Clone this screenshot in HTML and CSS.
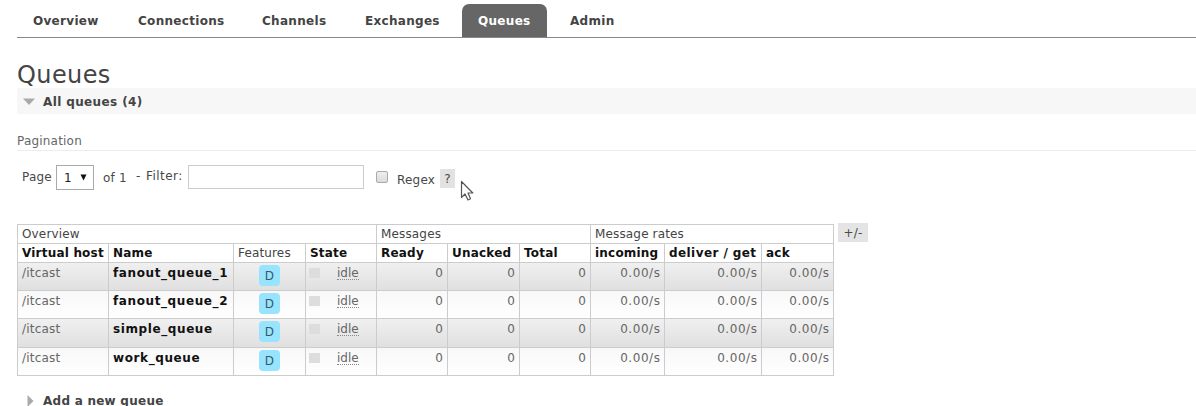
FILE: index.html
```html
<!DOCTYPE html>
<html lang="en">
<head>
<meta charset="utf-8">
<title>Queues</title>
<link rel="stylesheet" href="styles.css">
</head>
<body>
<nav class="tabs">
<a class="tab t-overview">Overview</a><a class="tab t-connections">Connections</a><a class="tab t-channels">Channels</a><a class="tab t-exchanges">Exchanges</a><a class="tab t-queues selected">Queues</a><a class="tab t-admin">Admin</a>
</nav>
<main>
<h1>Queues</h1>
<h2 class="section open"><svg class="tri" width="12" height="8" viewBox="0 0 12 8"><path d="M0 0.5H12L6 7z" fill="#aaa"/></svg><span>All queues (4)</span></h2>
<h3>Pagination</h3>
<form class="filters">
<span class="lbl-page">Page</span>
<span class="select"><span>1</span><svg width="7" height="7" viewBox="0 0 7 7"><path d="M0.5 0.5H6.5L3.5 6.5z" fill="#111"/></svg></span>
<span class="lbl-of">of 1</span>
<span class="lbl-dash">-</span>
<span class="lbl-filter">Filter:</span>
<input class="filter" type="text">
<span class="check"></span>
<span class="lbl-regex">Regex</span>
<span class="help">?</span>
<svg class="cursor" width="15" height="22" viewBox="0 0 15 22"><path d="M1.5 1.5V17.5L5 14L8 20L10.5 18.8L8 13H12.8z" fill="#fff" stroke="#555" stroke-width="1.2" stroke-linejoin="round"/></svg>
</form>
<div class="list">
<table>
<colgroup><col class="c-vhost"><col class="c-name"><col class="c-feat"><col class="c-state"><col class="c-ready"><col class="c-unacked"><col class="c-total"><col class="c-in"><col class="c-get"><col class="c-ack"></colgroup>
<thead>
<tr class="groups"><th colspan="4">Overview</th><th colspan="3">Messages</th><th colspan="3">Message rates</th></tr>
<tr class="heads"><th>Virtual host</th><th>Name</th><th class="plain">Features</th><th>State</th><th>Ready</th><th>Unacked</th><th>Total</th><th>incoming</th><th class="get">deliver / get</th><th>ack</th></tr>
</thead>
<tbody>
<tr class="alt"><td>/itcast</td><td class="name">fanout_queue_1</td><td class="feat"><span class="badge">D</span></td><td><span class="state"><i class="dot"></i><span class="idle">idle</span></span></td><td class="r">0</td><td class="r">0</td><td class="r">0</td><td class="r">0.00/s</td><td class="r">0.00/s</td><td class="r">0.00/s</td></tr>
<tr><td>/itcast</td><td class="name">fanout_queue_2</td><td class="feat"><span class="badge">D</span></td><td><span class="state"><i class="dot"></i><span class="idle">idle</span></span></td><td class="r">0</td><td class="r">0</td><td class="r">0</td><td class="r">0.00/s</td><td class="r">0.00/s</td><td class="r">0.00/s</td></tr>
<tr class="alt"><td>/itcast</td><td class="name">simple_queue</td><td class="feat"><span class="badge">D</span></td><td><span class="state"><i class="dot"></i><span class="idle">idle</span></span></td><td class="r">0</td><td class="r">0</td><td class="r">0</td><td class="r">0.00/s</td><td class="r">0.00/s</td><td class="r">0.00/s</td></tr>
<tr><td>/itcast</td><td class="name">work_queue</td><td class="feat"><span class="badge">D</span></td><td><span class="state"><i class="dot"></i><span class="idle">idle</span></span></td><td class="r">0</td><td class="r">0</td><td class="r">0</td><td class="r">0.00/s</td><td class="r">0.00/s</td><td class="r">0.00/s</td></tr>
</tbody>
</table>
<span class="columns">+/-</span>
</div>
<h2 class="section closed"><svg class="tri" width="7" height="12" viewBox="0 0 7 12"><path d="M0.5 0V12L6.5 6z" fill="#aaa"/></svg><span>Add a new queue</span></h2>
</main>
</body>
</html>
```

FILE: styles.css
```css
* { box-sizing: border-box; }
body {
  margin: 0;
  height: 406px;
  overflow: hidden;
  background: #fff;
  color: #484848;
  font: 12px/16px "DejaVu Sans", Verdana, sans-serif;
  letter-spacing: 0.2px;
}
.tabs {
  display: flex;
  align-items: flex-end;
  height: 38px;
  margin-left: 17px;
  border-bottom: 1px solid #888;
}
.tab {
  height: 33px;
  padding: 9px 0 0 16px;
  font-weight: bold;
  letter-spacing: 0.3px;
  color: #444;
  white-space: nowrap;
}
.t-overview { width: 105px; }
.t-connections { width: 124px; }
.t-channels { width: 103px; }
.t-exchanges { width: 113px; }
.t-queues { width: 85px; }
.t-admin { padding-left: 23px; }
.tab.selected {
  background: #666;
  color: #fff;
  border-radius: 7px 7px 0 0;
}
main { padding-left: 17px; }
h1 {
  margin: 20px 0 0;
  height: 30px;
  font-size: 24px;
  line-height: 34px;
  font-weight: normal;
  letter-spacing: 0.4px;
  color: #444;
}
.section {
  display: flex;
  align-items: center;
  margin: 0;
  height: 26px;
  font-size: 12px;
  color: #444;
  letter-spacing: 0.38px;
}
.open { background: #f7f7f7; padding: 2px 0 0 6px; }
.open .tri { margin-right: 8px; }
h3 {
  margin: 18px 0 0;
  height: 19px;
  font-size: 12px;
  line-height: 18px;
  font-weight: normal;
  color: #666;
  border-bottom: 1px solid #ececec;
}
.filters {
  position: relative;
  display: flex;
  align-items: flex-start;
  height: 73px;
  margin: 0;
  padding: 14px 0 0 5px;
  white-space: nowrap;
}
.filters > span { flex: none; }
.lbl-page { width: 34px; padding-top: 4px; }
.select {
  display: flex;
  align-items: center;
  justify-content: space-between;
  width: 38px;
  height: 25px;
  padding: 0 6px 0 7px;
  border: 1px solid #aaa;
  color: #222;
}
.lbl-of { width: 33px; margin-left: 9px; padding-top: 5px; }
.lbl-dash { width: 10px; padding-top: 3px; }
.lbl-filter { width: 42px; padding-top: 3px; letter-spacing: 0.45px; }
.filter {
  width: 176px;
  height: 24px;
  border: 1px solid #ccc;
  background: #fff;
}
.check {
  width: 12px;
  height: 12px;
  margin: 6px 9px 0 12px;
  border: 1px solid #aaa;
  border-radius: 2px;
  background: linear-gradient(#eee, #dcdcdc);
}
.lbl-regex { width: 43px; padding-top: 7px; }
.help {
  width: 15px;
  height: 19px;
  margin-top: 4px;
  line-height: 21px;
  text-align: center;
  background: #e2e2e2;
}
.cursor { position: absolute; left: 443px; top: 29px; }
.list { display: flex; align-items: flex-start; }
table {
  flex: none;
  width: 817px;
  table-layout: fixed;
  border-collapse: separate;
  border-spacing: 0;
  border-top: 1px solid #ccc;
  border-left: 1px solid #ccc;
}
.c-vhost { width: 91px; }
.c-name { width: 125px; }
.c-feat { width: 72px; }
.c-state { width: 71px; }
.c-ready { width: 71px; }
.c-unacked { width: 72px; }
.c-total { width: 71px; }
.c-in { width: 74px; }
.c-get { width: 97px; }
.c-ack { width: 72px; }
th, td {
  padding: 0 4px;
  border-right: 1px solid #ccc;
  border-bottom: 1px solid #ccc;
  text-align: left;
  vertical-align: top;
  white-space: nowrap;
}
th { height: 19px; line-height: 18px; color: #111; letter-spacing: 0.2px; }
.get { letter-spacing: 0.42px; }
.groups th, th.plain { font-weight: normal; color: #444; letter-spacing: 0.15px; }
td { height: 28px; line-height: 20px; color: #666; }
tbody tr:nth-child(3) td { height: 29px; line-height: 21px; }
tbody tr { background: linear-gradient(#f8f8f8, #fff); }
tbody tr.alt { background: linear-gradient(#f0f0f0, #dfdfdf); }
.name { font-weight: bold; color: #111; letter-spacing: 0.6px; }
.r { text-align: right; letter-spacing: 0.55px; padding-right: 3.5px; }
.badge {
  display: block;
  width: 21px;
  height: 21px;
  margin: 2px 0 0 21px;
  border-radius: 4px;
  background: #98e4ff;
  color: #355967;
  text-align: center;
  line-height: 22px;
}
.state { display: flex; align-items: flex-start; margin-left: -1px; }
.dot { width: 11px; height: 10px; margin: 5px 17px 0 0; background: #ddd; }
.idle { height: 17px; border-bottom: 1px dotted #888; letter-spacing: 0; }
.columns {
  width: 30px;
  height: 19px;
  margin: -1px 0 0 4px;
  line-height: 20px;
  text-align: center;
  background: #e4e4e4;
}
.closed { margin-top: 12px; padding-left: 10px; letter-spacing: 0.25px; }
.closed .tri { margin-right: 9px; }
```
